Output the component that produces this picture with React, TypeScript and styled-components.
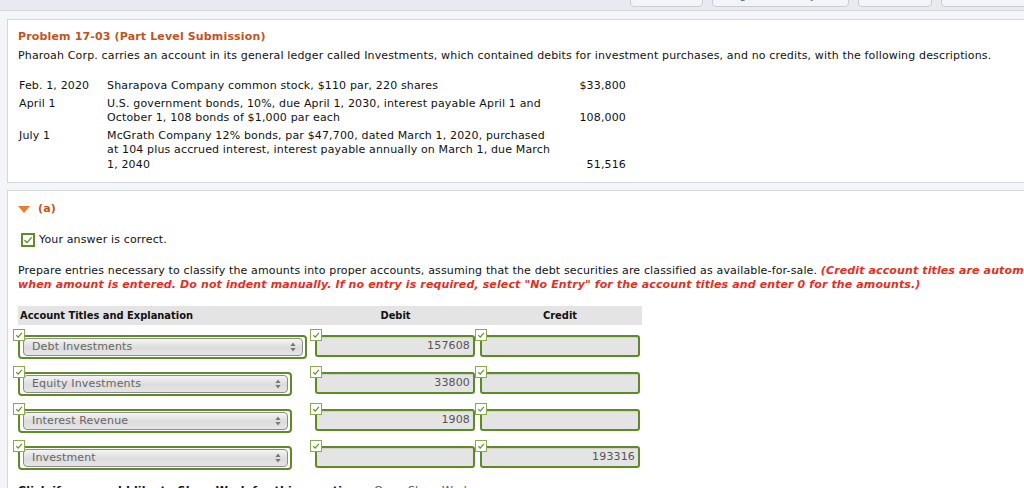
import React from "react";
import styled, { createGlobalStyle } from "styled-components";

const GREEN = "#5e8b26";

const GlobalStyle = createGlobalStyle`
  html, body { margin: 0; padding: 0; }
  body {
    background: #f4f5f8;
    overflow: hidden;
    font-family: "DejaVu Sans", Verdana, sans-serif;
    font-size: 11px;
    letter-spacing: 0.15px;
    color: #111;
  }
`;

const Page = styled.div`
  width: 1120px;
`;

const TopBar = styled.div`
  height: 10px;
  background: #e8eaef;
  border-bottom: 1px solid #d2d6de;
  display: flex;
  align-items: flex-end;
  gap: 9px;
  padding-left: 630px;
  overflow: hidden;
`;

const BarButton = styled.div<{ $w: number }>`
  flex: none;
  width: ${(p) => p.$w}px;
  height: 22px;
  margin-bottom: 3px;
  box-sizing: border-box;
  border: 1px solid #c9cdd6;
  border-radius: 4px;
  background: #f3f4f7;
  color: #4a6fb0;
  font-size: 11px;
  line-height: 20px;
  text-align: center;
  white-space: nowrap;
  overflow: hidden;
`;

const Content = styled.div`
  padding: 8px 0 0 7px;
  display: flex;
  flex-direction: column;
  gap: 7px;
`;

const Card = styled.div<{ $tight?: boolean }>`
  background: #fff;
  border: 1px solid #d4d8e0;
  padding: ${(p) => (p.$tight ? "10px 10px 10px 10px" : "9px 10px 11px 10px")};
`;

const Title = styled.div`
  color: #c4521d;
  font-weight: bold;
  line-height: 14px;
  margin-bottom: 5px;
`;

const Para = styled.div`
  line-height: 14px;
  white-space: nowrap;
`;

const InfoTable = styled.div`
  margin-top: 16px;
  margin-left: 1px;
  display: grid;
  grid-template-columns: 88px 452px 67px;
  row-gap: 3px;
  line-height: 14.5px;
`;

const InfoDate = styled.div``;
const InfoDesc = styled.div``;
const InfoAmt = styled.div`
  align-self: end;
  text-align: right;
`;

const PartHead = styled.div`
  display: flex;
  align-items: center;
  gap: 8px;
  margin-top: 2px;
  color: #c4521d;
  font-weight: bold;
  line-height: 14px;
`;

const Triangle = styled.span`
  width: 0;
  height: 0;
  border-left: 6px solid transparent;
  border-right: 6px solid transparent;
  border-top: 7px solid #ee7a30;
  margin-top: 1px;
`;

const Correct = styled.div`
  display: flex;
  align-items: center;
  gap: 4px;
  margin-top: 17px;
  margin-left: 3px;
  line-height: 14px;
`;

const BigCheck = styled.span`
  width: 14px;
  height: 14px;
  box-sizing: border-box;
  border: 1px solid ${GREEN};
  outline: 1px solid ${GREEN};
  outline-offset: -2px;
  background: #fff;
  display: flex;
  align-items: center;
  justify-content: center;
`;

const Prompt = styled.div`
  margin-top: 17px;
  line-height: 14px;
  white-space: nowrap;
`;

const Red = styled.span`
  color: #e2301f;
  font-weight: bold;
  font-style: italic;
  letter-spacing: 0.12px;
`;

const EntryTable = styled.div`
  margin-top: 14px;
  width: 624px;
  display: grid;
  grid-template-columns: 295px 165px 164px;
`;

const HeadCell = styled.div<{ $center?: boolean }>`
  background: #e4e4e4;
  height: 19px;
  line-height: 19px;
  font-family: "DejaVu Sans Condensed", "DejaVu Sans", sans-serif;
  font-weight: bold;
  letter-spacing: 0;
  padding-left: ${(p) => (p.$center ? 0 : 2)}px;
  text-align: ${(p) => (p.$center ? "center" : "left")};
`;

const Cell = styled.div<{ $indent: number }>`
  height: 37px;
  box-sizing: border-box;
  padding: 10px 0 0 ${(p) => p.$indent}px;
`;

const FieldWrap = styled.div`
  position: relative;
`;

const Badge = styled.span`
  position: absolute;
  left: -5px;
  top: -6px;
  width: 12px;
  height: 12px;
  box-sizing: border-box;
  border: 1px solid #86ac4c;
  background: #fff;
  display: flex;
  align-items: center;
  justify-content: center;
  z-index: 2;
`;

const SelectFrame = styled.div<{ $w: number }>`
  width: ${(p) => p.$w}px;
  height: 24px;
  box-sizing: border-box;
  border: 2px solid ${GREEN};
  border-radius: 4px;
  padding: 1px 2px 1px 3px;
  background: #fff;
`;

const SelectBox = styled.div`
  height: 18px;
  box-sizing: border-box;
  border: 1px solid #8c8c8c;
  border-radius: 4px;
  background: linear-gradient(#f4f4f4, #dcdcdc 55%, #e6e6e6);
  color: #666;
  display: flex;
  align-items: center;
  justify-content: space-between;
  padding: 0 6px 0 8px;
  line-height: 16px;
`;

const NumInput = styled.div`
  width: 160px;
  height: 22px;
  box-sizing: border-box;
  border: 2px solid ${GREEN};
  border-radius: 3px;
  background: #e4e4e4;
  box-shadow: inset 0 1px 1px rgba(0, 0, 0, 0.08);
  color: #555;
  text-align: right;
  padding-right: 3px;
  line-height: 18px;
`;

const Footer = styled.div`
  margin-top: 11px;
  display: flex;
  gap: 12px;
  line-height: 14px;
`;

const FooterLabel = styled.span`
  font-weight: bold;
`;

const FooterLink = styled.span`
  color: #555;
`;

const Tick = ({ size = 8 }: { size?: number }) => (
  <svg width={size} height={size} viewBox="0 0 10 10">
    <path d="M1.5 5.2 L4 7.6 L8.6 2.4" fill="none" stroke={GREEN} strokeWidth="1.4" />
  </svg>
);

const Arrows = () => (
  <svg width="6" height="10" viewBox="0 0 6 10">
    <path d="M3 0.5 L5.6 4 L0.4 4 Z" fill="#777" />
    <path d="M3 9.5 L5.6 6 L0.4 6 Z" fill="#777" />
  </svg>
);

const entries = [
  { account: "Debt Investments", debit: "157608", credit: "", wide: true },
  { account: "Equity Investments", debit: "33800", credit: "", wide: false },
  { account: "Interest Revenue", debit: "1908", credit: "", wide: false },
  { account: "Investment", debit: "", credit: "193316", wide: false },
];

const info = [
  {
    date: "Feb. 1, 2020",
    desc: "Sharapova Company common stock, $110 par, 220 shares",
    amt: "$33,800",
  },
  {
    date: "April 1",
    desc: "U.S. government bonds, 10%, due April 1, 2030, interest payable April 1 and October 1, 108 bonds of $1,000 par each",
    amt: "108,000",
  },
  {
    date: "July 1",
    desc: "McGrath Company 12% bonds, par $47,700, dated March 1, 2020, purchased at 104 plus accrued interest, interest payable annually on March 1, due March 1, 2040",
    amt: "51,516",
  },
];

export default function App() {
  return (
    <Page>
      <GlobalStyle />
      <TopBar>
        <BarButton $w={73}>Calculator</BarButton>
        <BarButton $w={137}>Assigned In WileyPLUS</BarButton>
        <BarButton $w={74}>Feedback</BarButton>
        <BarButton $w={110}>Printer Version</BarButton>
      </TopBar>
      <Content>
        <Card $tight>
          <Title>Problem 17-03 (Part Level Submission)</Title>
          <Para>
            Pharoah Corp. carries an account in its general ledger called Investments, which contained
            debits for investment purchases, and no credits, with the following descriptions.
          </Para>
          <InfoTable>
            {info.map((r) => (
              <React.Fragment key={r.date}>
                <InfoDate>{r.date}</InfoDate>
                <InfoDesc>{r.desc}</InfoDesc>
                <InfoAmt>{r.amt}</InfoAmt>
              </React.Fragment>
            ))}
          </InfoTable>
        </Card>
        <Card>
          <PartHead>
            <Triangle />
            <span>(a)</span>
          </PartHead>
          <Correct>
            <BigCheck>
              <Tick size={10} />
            </BigCheck>
            <span>Your answer is correct.</span>
          </Correct>
          <Prompt>
            Prepare entries necessary to classify the amounts into proper accounts, assuming that the debt
            securities are classified as available-for-sale.{" "}
            <Red>(Credit account titles are automatically indented</Red>
            <br />
            <Red>
              when amount is entered. Do not indent manually. If no entry is required, select "No Entry" for
              the account titles and enter 0 for the amounts.)
            </Red>
          </Prompt>
          <EntryTable>
            <HeadCell>Account Titles and Explanation</HeadCell>
            <HeadCell $center>Debit</HeadCell>
            <HeadCell $center>Credit</HeadCell>
            {entries.map((e) => (
              <React.Fragment key={e.account}>
                <Cell $indent={0}>
                  <FieldWrap>
                    <Badge>
                      <Tick />
                    </Badge>
                    <SelectFrame $w={e.wide ? 289 : 274}>
                      <SelectBox>
                        <span>{e.account}</span>
                        <Arrows />
                      </SelectBox>
                    </SelectFrame>
                  </FieldWrap>
                </Cell>
                <Cell $indent={2}>
                  <FieldWrap>
                    <Badge>
                      <Tick />
                    </Badge>
                    <NumInput>{e.debit}</NumInput>
                  </FieldWrap>
                </Cell>
                <Cell $indent={2}>
                  <FieldWrap>
                    <Badge>
                      <Tick />
                    </Badge>
                    <NumInput>{e.credit}</NumInput>
                  </FieldWrap>
                </Cell>
              </React.Fragment>
            ))}
          </EntryTable>
          <Footer>
            <FooterLabel>Click if you would like to Show Work for this question:</FooterLabel>
            <FooterLink>Open Show Work</FooterLink>
          </Footer>
        </Card>
      </Content>
    </Page>
  );
}
